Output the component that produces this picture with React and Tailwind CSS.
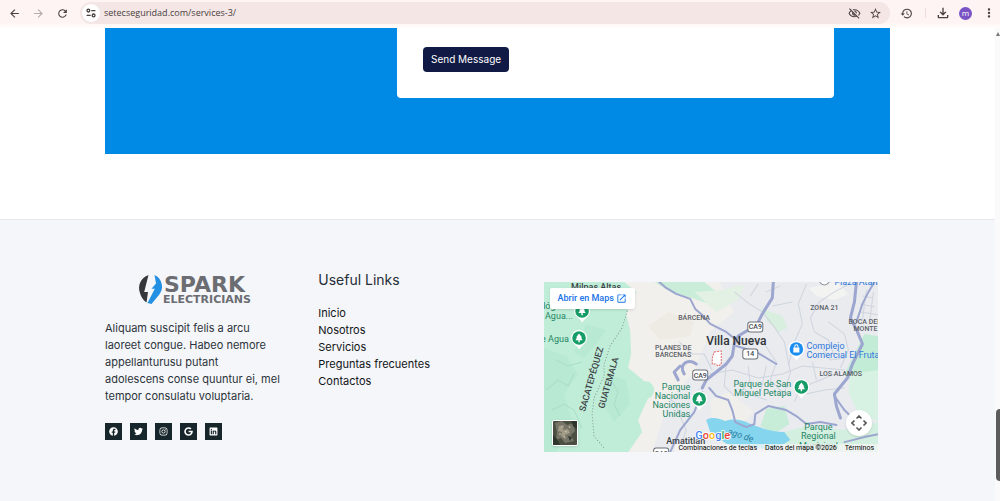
import {
  MdArrowBack, MdArrowForward, MdRefresh, MdOutlineVisibilityOff, MdStarOutline,
  MdHistory, MdOutlineFileDownload, MdMoreVert, MdOpenInNew
} from 'react-icons/md';
import { FaFacebook, FaTwitter, FaInstagram, FaGoogle, FaLinkedin } from 'react-icons/fa';

const LINKS = ['Inicio', 'Nosotros', 'Servicios', 'Preguntas frecuentes', 'Contactos'];

const SOCIALS = [
  { name: 'Facebook', Icon: FaFacebook },
  { name: 'Twitter', Icon: FaTwitter },
  { name: 'Instagram', Icon: FaInstagram },
  { name: 'Google', Icon: FaGoogle },
  { name: 'LinkedIn', Icon: FaLinkedin },
];

function BrowserBar() {
  return (
    <header className="h-7 shrink-0 flex items-start pt-0.5 pl-2 pr-1 bg-linear-to-b from-[#fdf4f3] from-80% to-[#fffdfb] text-[#4a3f3f] font-['Open_Sans',sans-serif]">
      <nav className="flex items-center gap-2.5 h-[22px] mr-2.5">
        <button aria-label="Back" className="w-3.5"><MdArrowBack className="size-[13px]" /></button>
        <button aria-label="Forward" className="w-3.5 text-[#b3aaa9]"><MdArrowForward className="size-[13px]" /></button>
        <button aria-label="Reload" className="w-3.5"><MdRefresh className="size-[13px]" /></button>
      </nav>
      <div className="flex-1 flex items-center h-[22px] rounded-full bg-[#f3e6e5] pl-0.5 pr-2">
        <button aria-label="Site settings" className="size-[18px] rounded-full bg-white flex items-center justify-center">
          <svg viewBox="0 0 10 10" className="size-2.5" fill="none" stroke="currentColor" strokeWidth="1.3">
            <circle cx="2.4" cy="2.6" r="1.4" />
            <path d="M5.3 2.6H9.4M0.6 7.4H4.7" />
            <circle cx="7.6" cy="7.4" r="1.4" />
          </svg>
        </button>
        <input
          aria-label="Address"
          defaultValue="setecseguridad.com/services-3/"
          className="flex-1 min-w-0 ml-1 bg-transparent text-[9px] outline-none"
        />
        <div className="flex items-center gap-2">
          <button aria-label="Third-party cookies"><MdOutlineVisibilityOff className="size-[13px]" /></button>
          <button aria-label="Bookmark"><MdStarOutline className="size-[13px]" /></button>
        </div>
      </div>
      <div className="flex items-center h-[22px] ml-2.5">
        <button aria-label="History"><MdHistory className="size-[13px]" /></button>
        <span className="w-px h-2.5 ml-3 mr-[9px] bg-[#eddcdb]" />
        <button aria-label="Downloads"><MdOutlineFileDownload className="size-4" /></button>
        <button aria-label="Profile" className="size-[13px] ml-2 rounded-full bg-[#7a53c4] text-white text-[8px] leading-3">m</button>
        <button aria-label="Menu" className="ml-2.5"><MdMoreVert className="size-3.5" /></button>
      </div>
    </header>
  );
}

function Logo() {
  return (
    <svg viewBox="-4 0 118 32" className="w-[118px] h-8 mx-auto overflow-visible" role="img" aria-label="Spark Electricians">
      <path d="M9.500 1C2 3.500-1.500 11 .8 18.500C2 23 4.500 26.500 7.500 28.500L9 18H5.200L9.500 1Z" fill="#35373a" />
      <path d="M15.500 1C20.500 3 23.500 8.500 23 14C22.500 17.500 21 19.500 19.500 21.500L12.500 30L8.500 29L15.800 14.800H12.500L17 9.500L15.500 1Z" fill="#2490e3" />
      <g fill="#6b6d72" fontFamily="'DejaVu Sans', sans-serif" fontWeight="700">
        <text x="25" y="18" fontSize="22">SPARK</text>
        <text x="24" y="29" fontSize="11">ELECTRICIANS</text>
      </g>
    </svg>
  );
}

function TreePin({ x, y }) {
  return (
    <g transform={`translate(${x} ${y})`}>
      <path d="M0 11.500C-2 7-8 5-8 0A8 8 0 0 1 8 0C8 5 3 7 0 11.500Z" fill="#fff" />
      <circle r="6.800" fill="#169c66" />
      <path d="M0-4.500L3-.5H2L3.600 2.200H.7V4.300H-.7V2.200H-3.600L-2-.5H-3Z" fill="#fff" />
    </g>
  );
}

function RoadSign({ x, y, label }) {
  return (
    <g transform={`translate(${x} ${y})`}>
      <rect x="-7.500" y="-5" width="15" height="10" rx="2.500" fill="#fff" stroke="#6c7178" strokeWidth="1" />
      <text y="2.500" textAnchor="middle" fontSize="7" fontWeight="500" fill="#454a50">{label}</text>
    </g>
  );
}

function MapDrawing() {
  return (
    <svg viewBox="0 0 334 170" preserveAspectRatio="xMidYMid slice" className="block w-full h-full" fontFamily="Roboto, sans-serif">
      <rect width="334" height="170" fill="#e9ebef" />

      {/* hills and parks */}
      <path d="M85 0H175L190 30 165 50 150 90 125 118 108 170H70V0Z" fill="#f2f0ec" />
      <path d="M0 0H80L92 10 82 32 86 48 87 72 84 86 99 98 104 116 94 138 98 150 84 170H0Z" fill="#c0edd8" />
      <path d="M0 66L22 74 34 92 20 112 28 138 12 170H0Z" fill="#b8e9d2" />
      <path d="M62 92L82 98 86 122 70 140 60 124Z" fill="#b8e9d2" />
      <path d="M42 42L62 48 52 62 40 76 30 70Z" fill="#b8e9d2" />
      <circle cx="101" cy="108" r="9" fill="#c0edd8" />
      <path d="M110 0H160L175 12 170 24 148 16 130 12Z" fill="#c9edd9" />
      <path d="M124 30L150 40 146 54 116 58 104 44Z" fill="#eeebe4" />
      <path d="M150 10L178 8 200 2 194 18 172 30Z" fill="#e3f0e4" />
      <path d="M216 26L238 34 243 46 234 50 222 38Z" fill="#d8eedf" />
      <path d="M320 52L334 54V90L318 94 308 100 300 92 310 72Z" fill="#c3ecd7" />
      <path d="M306 92L334 88V140L312 128 304 110Z" fill="#d7f1e2" />
      <path d="M222 127L240 124 245 142 230 152 216 144Z" fill="#c7edd9" />
      <path d="M240 150L262 144 300 148 334 140V170H240Z" fill="#d3efe0" />
      <path d="M166 118L185 110 210 130 196 144 168 138Z" fill="#f1efeb" />
      <path d="M264 6L292 0 304 12 290 18 272 14Z" fill="#f3f3f1" />

      {/* lake */}
      <path d="M162 138C168 134 176 137 181 139C190 136 198 138 204 141C216 146 228 150 240 150L246 158 230 168 206 165 184 163 166 150Z" fill="#86d5ee" />

      {/* relief lines */}
      <g fill="none" stroke="#a9dfc7" strokeWidth="1">
        <path d="M2 108L14 98 24 104 30 92" />
        <path d="M12 78L24 84 38 80" />
        <path d="M68 100L74 110 70 122 76 134" />
        <path d="M8 128L20 122 30 128 38 146" />
      </g>

      {/* side streets */}
      <g fill="none" stroke="#cfd4de" strokeWidth="1">
        <path d="M190 10L205 22 218 30 230 45 240 60 246 90 240 112" />
        <path d="M196 56L220 62 232 80 226 98 238 110" />
        <path d="M262 2L254 22 258 42 250 60 244 84" />
        <path d="M305 2L290 10 275 20 266 36 270 50 284 58 290 74" />
        <path d="M284 40L300 52 304 68 296 86" />
        <path d="M165 92L188 88 214 96 238 92 258 84 300 88" />
        <path d="M190 98L206 112 222 118" />
        <path d="M262 112L280 108 300 106" />
        <path d="M135 60L148 72 160 72 168 88" />
        <path d="M118 112L130 120 142 148 134 170" />
        <path d="M250 120L256 106 276 98 290 92" />
        <path d="M206 14L214 2M222 10L236 4M228 24L248 20" />
        <path d="M318 14L328 16M316 22L330 25M316 30L334 33M322 8L318 38M329 10L325 40" />
        <path d="M182 80L180 104 190 114M204 84L206 104M222 84L216 110" />
        <path d="M268 80L272 98M276 64L286 78 300 76" />
      </g>

      {/* highways */}
      <g fill="none" stroke="#9ca6cf" strokeLinejoin="round" strokeLinecap="round">
        <path strokeWidth="2" d="M115 0L122 6 132 12 146 17 151 27 158 33 166 42 182 50 192 58" />
        <path strokeWidth="3" d="M229 0L228 16 218 32 213 42 204 48 194 54 190 62 188 74 182 82 172 90 162 98 158 106" />
        <path strokeWidth="2" d="M192 64L212 70 232 82" />
        <path strokeWidth="3" d="M140 92C134 82 144 76 152 82M134 98L130 90 136 84" />
        <path strokeWidth="2" d="M158 110L150 130 136 148 126 170" />
        <path strokeWidth="2" d="M165 106L172 114 184 118 188 128 191 140 202 145 210 142 211 132 224 124 242 128 252 134 262 142 276 140 292 143" />
        <path strokeWidth="3" d="M312 0L310 20 306 36 313 50 318 62 308 82 303 96 290 112 292 124 296 136" />
        <path strokeWidth="2" d="M330 0L324 10 318 22 312 40" />
        <path strokeWidth="2" d="M290 114L300 128 312 140M300 160L320 155 334 152" />
      </g>
      <path d="M84 26L78 46 66 64 60 82 60 94 50 116 48 132 50 154 60 166" fill="none" stroke="#7f9a90" strokeWidth="1" strokeDasharray="1 2" />
      <path d="M170 70L177 69V82L174 84 171 82 168 82 168 76Z" fill="#fff" stroke="#e0696a" strokeWidth="1" strokeDasharray="2 1" />

      {/* places */}
      <g fill="#3d4347" fontWeight="500">
        <text x="27" y="8" fontSize="9">Milpas Altas</text>
        <text x="162" y="63" fontSize="12" fill="#2f3337">Villa Nueva</text>
        <text x="122" y="162" fontSize="9">Amatitlan</text>
        <text transform="translate(41 130) rotate(-74)" fontSize="9">SACATEPÉQUEZ</text>
        <text transform="translate(60 127) rotate(-74)" fontSize="9">GUATEMALA</text>
      </g>
      <g fill="#5b6067" fontSize="7" fontWeight="500">
        <text x="134" y="38">BÁRCENA</text>
        <text x="129" y="68" textAnchor="middle">PLANES DE</text>
        <text x="129" y="75" textAnchor="middle">BÁRCENAS</text>
        <text x="280" y="28" textAnchor="middle">ZONA 21</text>
        <text x="304" y="42">BOCA DEL</text>
        <text x="309" y="49">MONTE</text>
        <text x="275" y="94">LOS ALAMOS</text>
      </g>
      <g fill="#238663" fontSize="9">
        <text x="-6" y="27">ológica</text>
        <text x="1" y="37">Agua...</text>
        <text x="-3" y="60">e Agua</text>
        <g textAnchor="end">
          <text x="146" y="108">Parque</text>
          <text x="146" y="117">Nacional</text>
          <text x="146" y="126">Naciones</text>
          <text x="146" y="135">Unidas</text>
          <text x="247" y="105">Parque de San</text>
          <text x="247" y="114">Miguel Petapa</text>
        </g>
        <g textAnchor="middle">
          <text x="274" y="148">Parque</text>
          <text x="274" y="157">Regional</text>
          <text x="274" y="167">Municipal</text>
        </g>
      </g>
      <g fill="#3079dc" fontSize="9">
        <text x="290" y="3">Plaza Atanasio</text>
        <text x="262" y="67">Complejo</text>
        <text x="262" y="76">Comercial El Frutal</text>
      </g>
      <text transform="translate(183 152) rotate(18)" fontSize="9" fontStyle="italic" fill="#2b7c9e">ago de</text>

      <TreePin x={38} y={29} />
      <TreePin x={35} y={56} />
      <TreePin x={155} y={117} />
      <TreePin x={257} y={105} />
      <g transform="translate(252 67)">
        <path d="M0 11.500C-2 7-8 5-8 0A8 8 0 0 1 8 0C8 5 3 7 0 11.500Z" fill="#fff" />
        <circle r="6.800" fill="#1b8df0" />
        <path d="M-3-1.500H3V3.500H-3Z" fill="#fff" />
        <path d="M-1.600-1.500V-2.500A1.600 1.600 0 0 1 1.600-2.500V-1.500" fill="none" stroke="#fff" strokeWidth="1" />
      </g>
      <circle cx="280" cy="-2" r="5" fill="#fff" stroke="#8e969e" strokeWidth="1" />
      <RoadSign x={211} y={45} label="CA9" />
      <RoadSign x={206} y={72} label="14" />
      <RoadSign x={156} y={93} label="CA9" />
      <RoadSign x={117} y={171} label="CA2" />

      <text x="151" y="157" fontSize="11" fontWeight="500" stroke="#fff" strokeWidth="1.500" paintOrder="stroke">
        <tspan fill="#4285f4">G</tspan><tspan fill="#ea4335">o</tspan><tspan fill="#fbbc04">o</tspan><tspan fill="#4285f4">g</tspan><tspan fill="#34a853">l</tspan><tspan fill="#ea4335">e</tspan>
      </text>
    </svg>
  );
}

function MapCard() {
  return (
    <div className="relative h-[170px] overflow-hidden font-[Roboto,sans-serif]">
      <MapDrawing />
      <a href="#maps" className="absolute left-1.5 top-1.5 h-[21px] px-2 flex items-center gap-0.5 bg-white rounded-xs shadow-sm text-[9px] font-medium text-[#1a73e8]">
        Abrir en Maps <MdOpenInNew className="size-[11px]" />
      </a>
      <button aria-label="Satellite view" className="absolute left-2 bottom-1.5 size-[26px] border border-white rounded-xs overflow-hidden shadow">
        <svg viewBox="0 0 24 24" className="size-full">
          <rect width="24" height="24" fill="#4a4f42" />
          <path d="M2 2L9 0 14 4 20 2 22 10 18 14 21 20 12 22 8 17 3 19 4 11Z" fill="#777567" />
          <path d="M6 5L11 4 10 9 15 8 17 12 12 14 13 18 8 15 9 11 5 10Z" fill="#a19b88" />
          <path d="M0 14L4 18 7 24H0ZM18 0H24V8L20 5ZM15 15L19 16 17 20Z" fill="#2d352d" />
          <path d="M8 6H9M12 10L14 11M6 13H8M16 5L17 7M11 16H12" stroke="#cbc4b2" strokeWidth="1" />
        </svg>
      </button>
      <button aria-label="Map camera controls" className="absolute right-1.5 bottom-4 size-[26px] rounded-full bg-white shadow flex items-center justify-center text-[#555]">
        <svg viewBox="0 0 16 16" className="size-4" fill="none" stroke="currentColor" strokeWidth="1.600">
          <path d="M5.500 3.500L8 1 10.500 3.500M5.500 12.500L8 15 10.500 12.500M3.500 5.500L1 8 3.500 10.500M12.500 5.500L15 8 12.500 10.500" />
        </svg>
      </button>
      <div className="absolute right-0 bottom-0 h-2 pl-1 pr-1 flex items-center gap-2 bg-[#f5f5f5]/75 text-[7px] leading-none text-black whitespace-nowrap">
        <button>Combinaciones de teclas</button>
        <span>Datos del mapa ©2026</span>
        <a href="#terms">Términos</a>
      </div>
    </div>
  );
}

function Footer() {
  return (
    <footer className="flex-1 border-t border-[#e6e8ec] bg-[#f5f6f9]">
      <div className="max-w-[785px] mx-auto pr-3 pt-[52px] grid grid-cols-[177fr_189fr_334fr] gap-9 items-start font-[Inter,sans-serif] text-[11px] leading-[17px]">
        <div className="pt-0.5">
          <Logo />
          <p className="mt-3.5 text-[#2b333b]">
            Aliquam suscipit felis a arcu laoreet congue. Habeo nemore appellanturusu putant
            <br />
            adolescens conse quuntur ei, mel tempor consulatu voluptaria.
          </p>
          <div className="mt-[18px] flex gap-2">
            {SOCIALS.map(({ name, Icon }) => (
              <a key={name} href="#social" aria-label={name} className="size-[17px] bg-[#17262b] text-white flex items-center justify-center">
                <Icon className="size-[9px]" />
              </a>
            ))}
          </div>
        </div>
        <div>
          <h2 className="text-[14px] leading-4 text-[#252d36]">Useful Links</h2>
          <ul className="mt-[17px] text-[#111417]">
            {LINKS.map((link) => (
              <li key={link}><a href="#link">{link}</a></li>
            ))}
          </ul>
        </div>
        <div className="pt-2.5">
          <MapCard />
        </div>
      </div>
    </footer>
  );
}

export default function App() {
  return (
    <div className="h-screen flex flex-col overflow-hidden bg-white">
      <BrowserBar />
      <div className="flex-1 min-h-0 flex">
        <main className="flex-1 min-w-0 flex flex-col">
          <section className="w-full max-w-[785px] mx-auto mb-[65px] pb-14 pl-[292px] pr-14 bg-[#0089e5]">
            <form className="bg-white rounded-b-sm px-[26px] pt-[19px] pb-[26px]">
              <button type="button" className="block h-[25px] px-2 rounded bg-[#101a44] text-white text-[10px] font-[Inter,sans-serif]">Send Message</button>
            </form>
          </section>
          <Footer />
        </main>
        <div className="w-[5px] shrink-0 flex flex-col items-end bg-[#fafafa]">
          <span className="mt-1 border-x-2 border-b-4 border-x-transparent border-b-[#777]" />
          <span className="mt-auto mb-5 w-1 h-[72px] rounded-l-sm bg-[#5c5c5c]" />
        </div>
      </div>
    </div>
  );
}
